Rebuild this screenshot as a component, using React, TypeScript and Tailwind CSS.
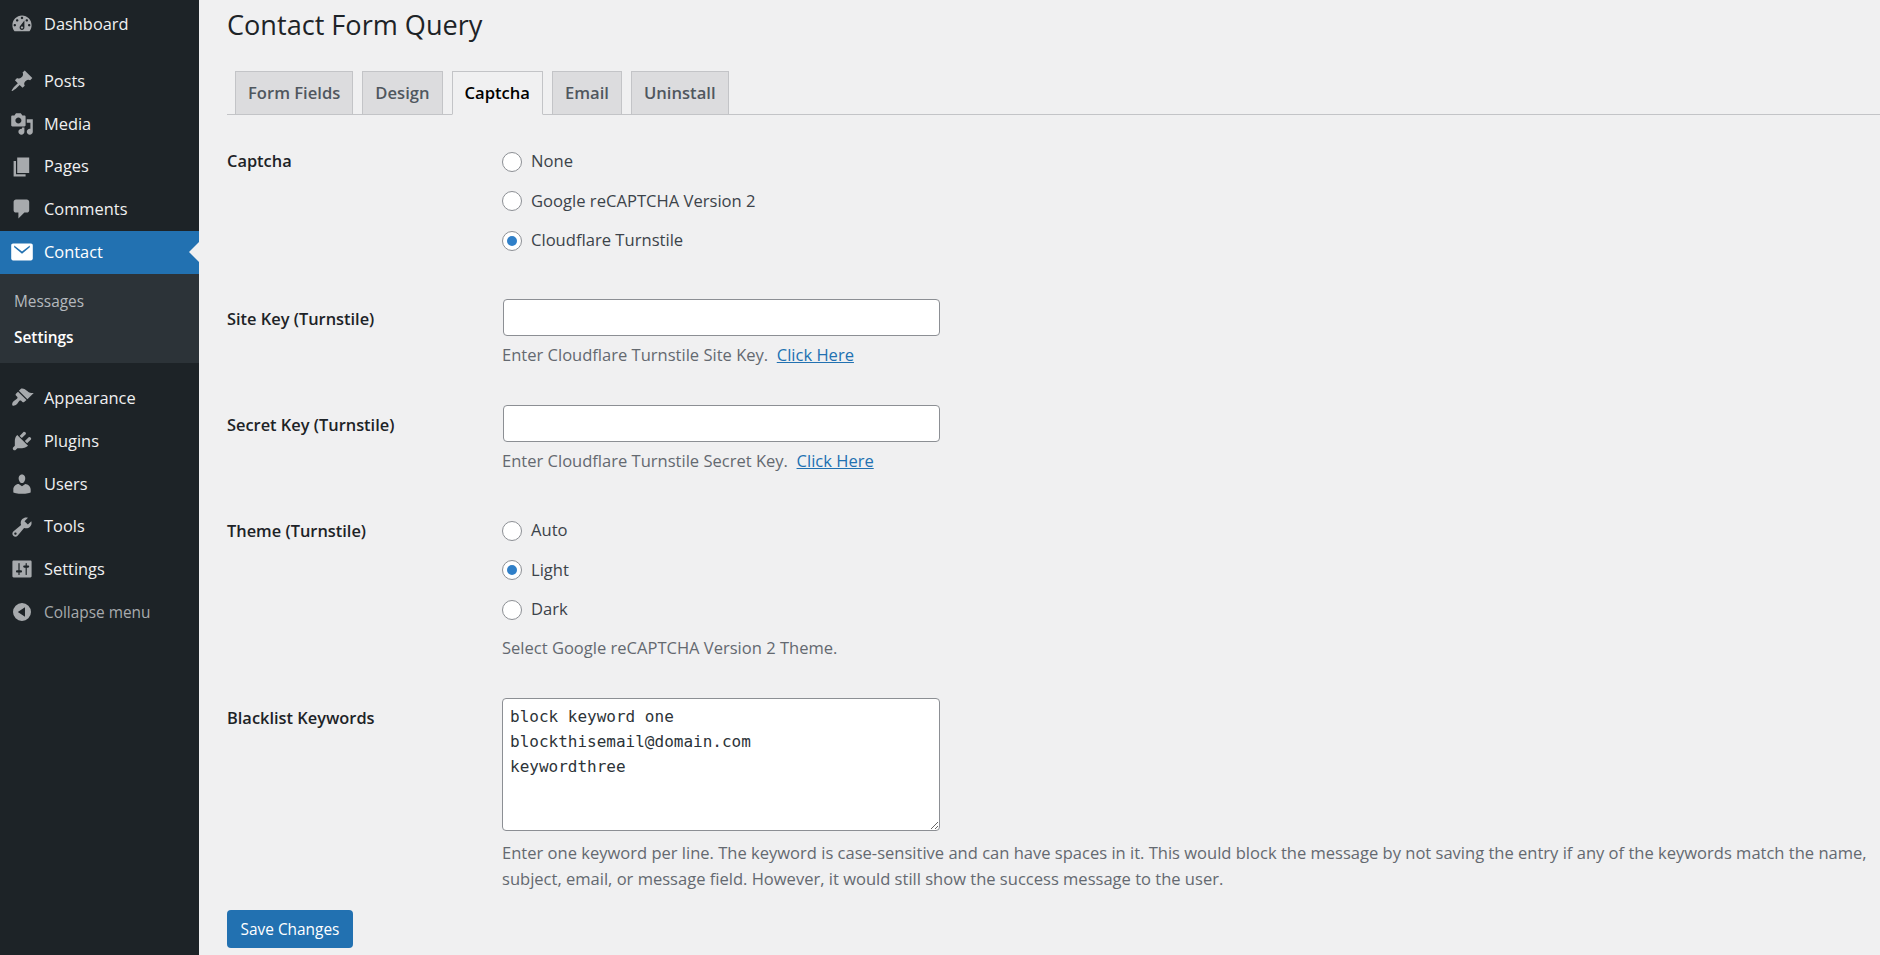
const font = { fontFamily: '"Open Sans", sans-serif' };

const icons: Record<string, string> = {
  dashboard:
    "M3.76 16h12.48c1.1-1.37 1.76-3.11 1.76-5 0-4.42-3.58-8-8-8s-8 3.58-8 8c0 1.89.66 3.63 1.76 5zM10 4c.55 0 1 .45 1 1s-.45 1-1 1-1-.45-1-1 .45-1 1-1zM6 6c.55 0 1 .45 1 1s-.45 1-1 1-1-.45-1-1 .45-1 1-1zm8 0c.55 0 1 .45 1 1s-.45 1-1 1-1-.45-1-1 .45-1 1-1zm-5.37 5.55L12 7v6c0 1.1-.9 2-2 2s-2-.9-2-2c0-.57.24-1.08.63-1.45zM4 10c.55 0 1 .45 1 1s-.45 1-1 1-1-.45-1-1 .45-1 1-1zm12 0c.55 0 1 .45 1 1s-.45 1-1 1-1-.45-1-1 .45-1 1-1zm-5 3c0-.55-.45-1-1-1s-1 .45-1 1 .45 1 1 1 1-.45 1-1z",
  posts:
    "M10.44 3.02l1.82-1.82 6.36 6.35-1.83 1.82c-1.05-.68-2.48-.57-3.41.36l-.75.75c-.92.93-1.04 2.35-.35 3.41l-1.83 1.82-2.41-2.41-2.8 2.79c-.42.42-3.38 2.71-3.8 2.29s1.86-3.39 2.28-3.81l2.79-2.79L4.1 9.36l1.83-1.82c1.05.69 2.48.57 3.4-.36l.75-.75c.93-.92 1.05-2.35.36-3.41z",
  media:
    "M13 11V4c0-.55-.45-1-1-1h-1.67L9 1H5L3.67 3H2c-.55 0-1 .45-1 1v7c0 .55.45 1 1 1h10c.55 0 1-.45 1-1zM7 4.5c1.38 0 2.5 1.12 2.5 2.5S8.38 9.5 7 9.5 4.5 8.38 4.5 7 5.62 4.5 7 4.5zM14 6h5v10.5c0 1.38-1.12 2.5-2.5 2.5S14 17.88 14 16.5s1.12-2.5 2.5-2.5c.17 0 .34.02.5.05V9h-3V6zm-4 8.05V13h2v3.5c0 1.38-1.12 2.5-2.5 2.5S7 17.88 7 16.5 8.12 14 9.5 14c.17 0 .34.02.5.05z",
  pages: "M6 15V2h10v13H6zm-1 1h8v2H3V5h2v11z",
  comments:
    "M5 2h9c1.1 0 2 .9 2 2v7c0 1.1-.9 2-2 2h-2l-5 5v-5H5c-1.1 0-2-.9-2-2V4c0-1.1.9-2 2-2z",
  contact:
    "M2.5 3h15c.8 0 1.5.7 1.5 1.5v11c0 .8-.7 1.5-1.5 1.5h-15C1.7 17 1 16.3 1 15.5v-11C1 3.7 1.7 3 2.5 3zM3.5 6.1l6.5 5.4 6.5-5.4v-1.6L10 9.6 3.5 4.5z",
  appearance:
    "M14.48 11.06L7.41 3.99l1.5-1.5c.5-.56 2.3-.47 3.51.32 1.21.8 1.43 1.28 2.91 2.1 1.18.64 2.45 1.26 4.45.85zm-.71.71L6.7 4.7 4.93 6.47c-.39.39-.39 1.02 0 1.41l1.06 1.06c.39.39.39 1.03 0 1.42-.6.6-1.43 1.11-2.21 1.69-.35.26-.7.53-1.01.84-.7.7-1.4 2.6-.7 3.3s2.6 0 3.3-.7c.3-.3.6-.65.84-1 .58-.78 1.09-1.6 1.69-2.21.39-.39 1.03-.39 1.42 0l1.06 1.06c.39.39 1.02.39 1.41 0z",
  plugins:
    "M13.11 4.36L9.87 7.6 8 5.73l3.24-3.24c.35-.34 1.05-.2 1.56.32.52.51.66 1.21.31 1.55zm-8 1.77l.91-1.12 9.01 9.01-1.19.84c-.71.71-2.63 1.16-3.82 1.16H6.14L4.9 17.26c-.59.59-1.54.59-2.12 0-.59-.58-.59-1.53 0-2.12l1.24-1.24v-3.88c0-1.13.4-3.19 1.09-3.89zm7.26 3.97l3.24-3.24c.34-.35 1.04-.21 1.55.31.52.51.66 1.21.31 1.55l-3.24 3.25z",
  users:
    "M10 9.25c-2.27 0-2.73-3.44-2.73-3.44C7 4.02 7.82 2 9.97 2c2.16 0 2.98 2.02 2.71 3.81 0 0-.41 3.44-2.68 3.44zm0 2.57L12.72 10c2.39 0 4.52 2.33 4.52 4.53v2.49s-3.65 1.13-7.24 1.13c-3.65 0-7.24-1.13-7.24-1.13v-2.49c0-2.25 1.94-4.48 4.47-4.48z",
  tools:
    "M16.68 9.77c-1.34 1.34-3.3 1.67-4.95.99l-5.41 6.52c-.99.99-2.59.99-3.58 0s-.99-2.59 0-3.57l6.52-5.42c-.68-1.65-.35-3.61.99-4.95 1.28-1.28 3.12-1.62 4.72-1.06l-2.89 2.89 2.82 2.82 2.86-2.87c.53 1.58.18 3.39-1.08 4.65zM3.81 16.21c.4.39 1.04.39 1.43 0 .4-.4.4-1.04 0-1.43-.39-.4-1.03-.4-1.43 0-.39.39-.39 1.03 0 1.43z",
  settings:
    "M18 16V4c0-.55-.45-1-1-1H3c-.55 0-1 .45-1 1v12c0 .55.45 1 1 1h14c.55 0 1-.45 1-1zM8 11h1c.55 0 1 .45 1 1s-.45 1-1 1H8v1.5c0 .28-.22.5-.5.5s-.5-.22-.5-.5V13H6c-.55 0-1-.45-1-1s.45-1 1-1h1V5.5c0-.28.22-.5.5-.5s.5.22.5.5V11zm5-2h-1c-.55 0-1-.45-1-1s.45-1 1-1h1V5.5c0-.28.22-.5.5-.5s.5.22.5.5V7h1c.55 0 1 .45 1 1s-.45 1-1 1h-1v5.5c0 .28-.22.5-.5.5s-.5-.22-.5-.5V9z",
  collapse:
    "M10 2.5a7.5 7.5 0 1 1 0 15 7.5 7.5 0 0 1 0-15zM12.5 6l-6 4 6 4z",
};

function Icon({ name, className }: { name: string; className: string }) {
  return (
    <svg viewBox="0 0 20 20" className={`h-6 w-6 shrink-0 fill-current ${className}`}>
      <path d={icons[name]} fillRule="evenodd" />
    </svg>
  );
}

function MenuItem({ icon, label, active }: { icon: string; label: string; active?: boolean }) {
  return (
    <div
      className={`relative flex h-[42.75px] items-center pl-[10px] ${
        active ? "bg-[#2271b1] text-white" : "text-[#f0f0f1]"
      }`}
    >
      <Icon name={icon} className={active ? "text-white" : "text-[#a7aaad]"} />
      <span className="ml-[10px] text-[16.4px]">{label}</span>
      {active && (
        <span className="absolute right-0 top-[11px] border-y-[10px] border-r-[10px] border-y-transparent border-r-[#f0f0f1]" />
      )}
    </div>
  );
}

function Sidebar() {
  return (
    <aside className="flex w-[199px] shrink-0 flex-col bg-[#1d2327] pt-[3px]">
      <MenuItem icon="dashboard" label="Dashboard" />
      <div className="h-[14px]" />
      <MenuItem icon="posts" label="Posts" />
      <MenuItem icon="media" label="Media" />
      <MenuItem icon="pages" label="Pages" />
      <MenuItem icon="comments" label="Comments" />
      <MenuItem icon="contact" label="Contact" active />
      <div className="flex h-[89.5px] flex-col bg-[#2c3338] pl-[14px] pt-[10px] text-[15.4px]">
        <div className="flex h-[36px] items-center text-[#b4b9be]">Messages</div>
        <div className="flex h-[36px] items-center font-semibold text-white">Settings</div>
      </div>
      <div className="h-[14px]" />
      <MenuItem icon="appearance" label="Appearance" />
      <MenuItem icon="plugins" label="Plugins" />
      <MenuItem icon="users" label="Users" />
      <MenuItem icon="tools" label="Tools" />
      <MenuItem icon="settings" label="Settings" />
      <div className="flex h-[42.75px] items-center pl-[10px] text-[#a7aaad]">
        <Icon name="collapse" className="text-[#a7aaad]" />
        <span className="ml-[10px] text-[15.4px]">Collapse menu</span>
      </div>
    </aside>
  );
}

function Tab({ label, active }: { label: string; active?: boolean }) {
  return (
    <div
      className={`-mb-px flex h-[44px] items-center border border-[#c3c4c7] px-[12px] text-[16.6px] font-semibold ${
        active ? "border-b-[#f0f0f1] bg-[#f0f0f1] text-black" : "bg-[#dcdcde] text-[#50575e]"
      }`}
    >
      {label}
    </div>
  );
}

function Radio({ label, checked }: { label: string; checked?: boolean }) {
  return (
    <label className="flex h-[39.5px] items-center text-[16.6px] text-[#3c434a]">
      <span className="flex h-[20px] w-[20px] items-center justify-center rounded-full border border-[#8c8f94] bg-white">
        {checked && <span className="h-[10px] w-[10px] rounded-full bg-[#2f7fc8]" />}
      </span>
      <span className="ml-[9px]">{label}</span>
    </label>
  );
}

function Row({ label, className, children }: { label: string; className: string; children: React.ReactNode }) {
  return (
    <div className={`flex ${className}`}>
      <div className="w-[275px] shrink-0 text-[16.4px] font-semibold text-[#1d2327]">{label}</div>
      <div className="min-w-0 flex-1">{children}</div>
    </div>
  );
}

function Help({ children }: { children: React.ReactNode }) {
  return <p className="text-[16.55px] text-[#646970]">{children}</p>;
}

function KeyField({ text }: { text: string }) {
  return (
    <>
      <input
        type="text"
        className="ml-px block h-[37px] w-[437px] rounded-[4px] border border-[#8c8f94] bg-white"
      />
      <div className="mt-[7px]">
        <Help>
          {text}&nbsp;{" "}
          <a className="text-[#2271b1] underline">Click Here</a>
        </Help>
      </div>
    </>
  );
}

export default function App() {
  return (
    <div className="flex h-[955px] overflow-hidden bg-[#f0f0f1]" style={font}>
      <Sidebar />
      <main className="min-w-0 flex-1 pl-[28px]">
        <h1 className="pt-[6px] text-[27.1px] leading-[38px] text-[#1d2327]">Contact Form Query</h1>
        <div className="mt-[27px] flex gap-[9px] border-b border-[#c3c4c7] pl-[8px]">
          <Tab label="Form Fields" />
          <Tab label="Design" />
          <Tab label="Captcha" active />
          <Tab label="Email" />
          <Tab label="Uninstall" />
        </div>

        <Row label="Captcha" className="mt-[34px]">
          <div className="-mt-[7px]">
            <Radio label="None" />
            <Radio label="Google reCAPTCHA Version 2" />
            <Radio label="Cloudflare Turnstile" checked />
          </div>
        </Row>

        <Row label="Site Key (Turnstile)" className="mt-[46px]">
          <div className="-mt-[8px]">
            <KeyField text="Enter Cloudflare Turnstile Site Key." />
          </div>
        </Row>

        <Row label="Secret Key (Turnstile)" className="mt-[46px]">
          <div className="-mt-[8px]">
            <KeyField text="Enter Cloudflare Turnstile Secret Key." />
          </div>
        </Row>

        <Row label="Theme (Turnstile)" className="mt-[45px]">
          <div className="-mt-[8px]">
            <Radio label="Auto" />
            <Radio label="Light" checked />
            <Radio label="Dark" />
            <div className="mt-[6px]">
              <Help>Select Google reCAPTCHA Version 2 Theme.</Help>
            </div>
          </div>
        </Row>

        <Row label="Blacklist Keywords" className="mt-[46px]">
          <div className="-mt-[8px]">
            <textarea
              readOnly
              className="block h-[133px] w-[438px] rounded-[4px] border border-[#8c8f94] bg-white px-[7px] py-[5px] text-[16px] leading-[25px] text-[#2c3338]"
              style={{ fontFamily: '"DejaVu Sans Mono", monospace' }}
              value={"block keyword one\nblockthisemail@domain.com\nkeywordthree"}
            />
            <div className="mt-[9px] whitespace-nowrap leading-[26px]">
              <Help>
                Enter one keyword per line. The keyword is case-sensitive and can have spaces in it. This would block the message by not saving the entry if any of the keywords match the name,
                <br />
                subject, email, or message field. However, it would still show the success message to the user.
              </Help>
            </div>
          </div>
        </Row>

        <button className="mt-[18px] h-[38px] w-[126px] rounded-[4px] bg-[#2271b1] text-[15.4px] text-white">
          Save Changes
        </button>
      </main>
    </div>
  );
}
